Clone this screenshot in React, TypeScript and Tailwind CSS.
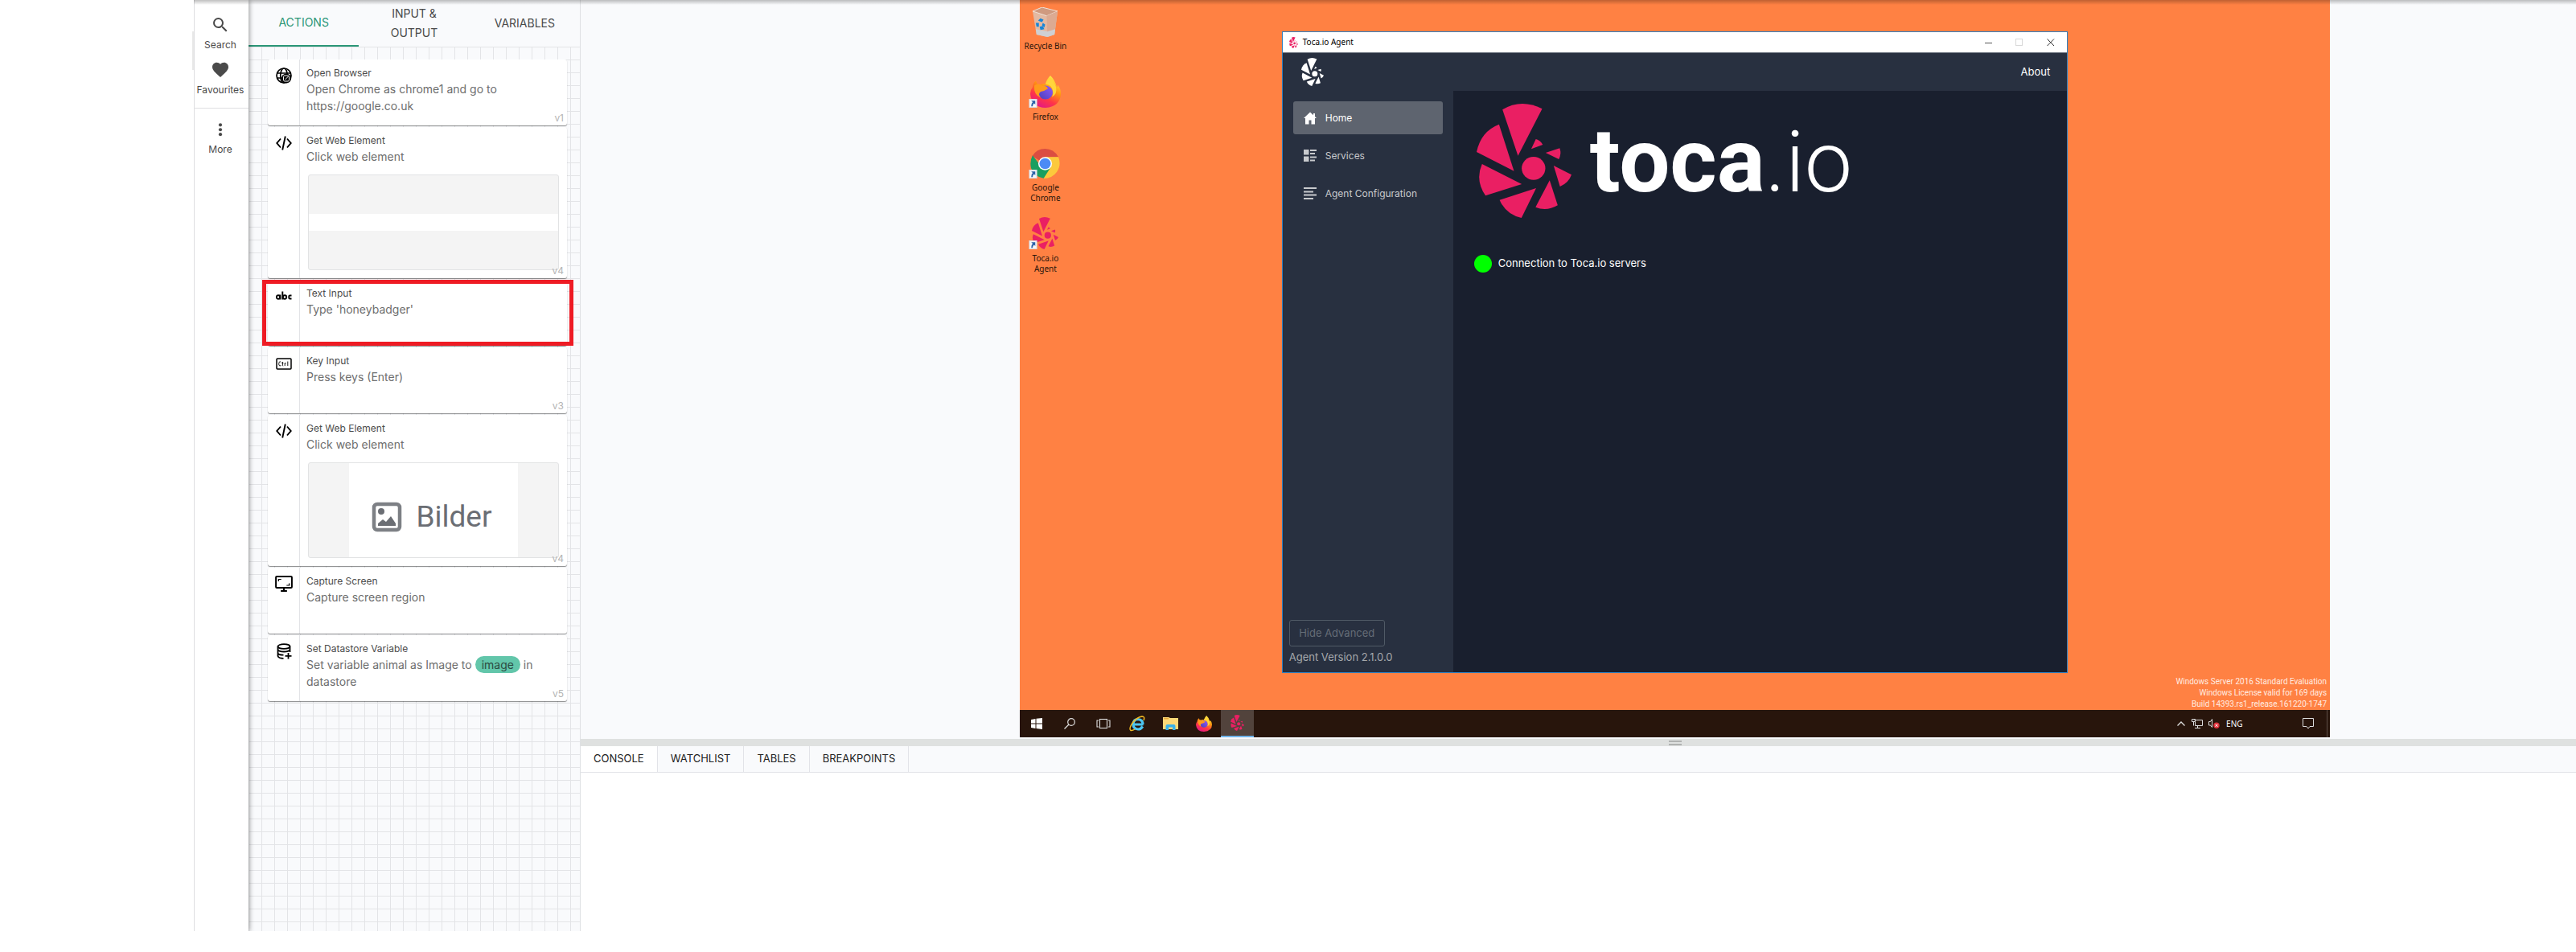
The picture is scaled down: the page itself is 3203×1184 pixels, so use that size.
import React from 'react';

const SANS = "font-['Inter','Liberation_Sans',sans-serif]";

type Kind = 'globe' | 'code' | 'abc' | 'ctrl' | 'screen' | 'db';

function TocaMark({ className }: { className: string }) {
  return (
    <svg viewBox="0 0 330 426" preserveAspectRatio="none" className={className} fill="currentColor" aria-hidden="true">
      <path d="M90 22Q155-20 228 19L144 194Z" />
      <path d="M78 77Q15 103 0 180L130 251Z" />
      <path d="M19 225Q-6 285 31 343L157 300Z" />
      <path d="M80 359Q102 413 156 426L207 315Z" />
      <path d="M205 386Q243 403 282 379L254 286Z" />
      <path d="M268 231L290 309Q320 296 330 265Z" />
      <path d="M240 183L286 207Q296 187 289 166Z" />
      <path d="M190 169L206 132Q222 137 230 153Z" />
      <ellipse cx="198" cy="241" rx="41" ry="43" />
    </svg>
  );
}

function ActionIcon({ kind }: { kind: Kind }) {
  const base = 'size-5 text-black';
  switch (kind) {
    case 'globe':
      return (
        <svg viewBox="0 0 20 20" className={base} fill="none" stroke="currentColor" strokeWidth="1.7">
          <circle cx="10" cy="10" r="9" />
          <ellipse cx="10" cy="10" rx="4.3" ry="9" />
          <path d="M1.5 7h17M1.5 13h17" />
          <circle cx="13" cy="13.5" r="6" fill="#000" stroke="none" />
          <rect x="9.500" y="10" width="7" height="7" rx="1.500" stroke="#fff" strokeWidth="1" />
          <path d="M11.500 15l4-4" stroke="#fff" strokeWidth="1" />
        </svg>
      );
    case 'code':
      return (
        <svg viewBox="0 0 20 20" className={base} fill="none" stroke="currentColor" strokeWidth="1.900">
          <path d="M6 4.500L1.300 10L6 15.500M14 4.500L18.700 10L14 15.500M11.800 1.500L8.200 18.500" />
        </svg>
      );
    case 'abc':
      return (
        <svg viewBox="0 0 20 20" className={base} fill="none" stroke="currentColor" strokeWidth="1.900">
          <circle cx="3" cy="11.500" r="2.200" />
          <path d="M5.400 8.500v6M8.300 4.500v10" />
          <circle cx="11" cy="11.500" r="2.200" />
          <path d="M19.500 9.500h-2q-1.200 0-1.200 1v2q0 1 1.200 1h2" />
        </svg>
      );
    case 'ctrl':
      return (
        <svg viewBox="0 0 20 20" className={base} fill="none" stroke="currentColor">
          <rect x="1" y="4" width="18" height="13" rx="1" strokeWidth="1.500" />
          <path d="M6.300 8.500Q5.800 7.800 5 7.800Q3.700 8 3.700 10.500T5 13Q6 13 6.400 12.200M8.400 8v4.500q0 .5.800.5M7.400 9.500h2M11.200 13V9.500M11.200 10.500q.3-1 1.600-.9M14.800 7.500V13" strokeWidth=".9" />
        </svg>
      );
    case 'screen':
      return (
        <svg viewBox="0 0 20 20" className="w-[22px] h-5 text-black" preserveAspectRatio="none" fill="none" stroke="currentColor" strokeWidth="1.800">
          <rect x="1" y="1" width="18" height="14" rx="1" />
          <path d="M10 15v4M6.500 19h7" />
          <path d="M4 7V4.500h3M16 9.500V12h-3" strokeWidth="1.200" />
        </svg>
      );
    default:
      return (
        <svg viewBox="0 0 20 20" className={base} fill="none" stroke="currentColor" strokeWidth="1.800">
          <ellipse cx="10" cy="4" rx="7.500" ry="2.800" />
          <path d="M2.500 4v12q1 2.800 7 2.800M17.500 4v7M2.500 8q1.500 2.500 7.500 2.500T17.500 8M2.500 12.500q1 2 7 2.200M11.500 15.800h8M15.500 12v7.500" />
        </svg>
      );
  }
}

function Card({
  kind,
  title,
  version,
  children,
  preview,
}: {
  kind: Kind;
  title: string;
  version?: string;
  children: React.ReactNode;
  preview?: React.ReactNode;
}) {
  return (
    <div
      className={`relative flex bg-white rounded-[3px] shadow-[0_1px_1px_rgba(0,0,0,0.45)] ${preview ? 'min-h-[188px]' : 'min-h-[82px]'}`}
    >
      <div className="w-10 shrink-0 border-r border-[#e2e3e6] flex justify-center items-start pt-[10px]">
        <ActionIcon kind={kind} />
      </div>
      <div className="flex-1 pl-2 pr-[10px] pt-2">
        <h3 className="text-[12px] leading-[18px] text-[#4c4c4c]">{title}</h3>
        <p className="text-[14px] leading-[21px] text-[#6e6e6e]">{children}</p>
        {preview && (
          <div className="mt-3 ml-[2px] h-[119px] rounded-[3px] border border-[#e2e3e4] bg-[#f4f4f4] flex overflow-hidden">{preview}</div>
        )}
      </div>
      {version && <span className="absolute right-1 bottom-[1px] text-[12px] leading-4 text-[#b4b4b4]">{version}</span>}
    </div>
  );
}

function FirefoxIcon({ className, id }: { className: string; id: string }) {
  return (
    <svg viewBox="0 0 38 42" preserveAspectRatio="none" className={className} aria-hidden="true">
      <defs>
        <linearGradient id={`${id}a`} x1="0.8" y1="0" x2="0.3" y2="1">
          <stop offset="0" stopColor="#fff44f" />
          <stop offset="0.4" stopColor="#ff980e" />
          <stop offset="0.7" stopColor="#ff3647" />
          <stop offset="1" stopColor="#e31587" />
        </linearGradient>
        <linearGradient id={`${id}b`} x1="1" y1="0" x2="0" y2="1">
          <stop offset="0" stopColor="#9059ff" />
          <stop offset="1" stopColor="#4a3fb5" />
        </linearGradient>
      </defs>
      <path d="M25 0Q20 5 19 11Q14 10 11 13Q8 11 7 7Q3 10 3 15Q0 19 0 24Q2 42 19 42Q38 40 38 23Q38 17 34 12Q34 15 33 15Q31 6 25 0Z" fill={`url(#${id}a)`} />
      <circle cx="19" cy="22" r="9" fill={`url(#${id}b)`} />
      <path d="M5 13Q10 9 15 13Q21 13 22 17Q18 20 13 21Q9 24 13 29Q4 25 5 13Z" fill="#ff9a1c" />
      <path d="M19 11Q27 12 28 20Q29 24 27 28Q34 24 32 15Q29 7 25 3Q20 6 19 11Z" fill="#ffd53c" />
    </svg>
  );
}

function ChromeIcon() {
  return (
    <svg viewBox="0 0 38 40" preserveAspectRatio="none" className="w-[37px] h-[37px]" aria-hidden="true">
      <path d="M19 20L2.500 10Q8 0 19 0Q30 0 36 11H19Z" fill="#db4d41" />
      <path d="M3 9Q-1 17 1 26Q5 38 18 40L27 25L19 20H11Z" fill="#1a9f60" />
      <path d="M19 11H36Q40 22 34 31Q28 40 17 40L26 25Z" fill="#fcc93c" />
      <circle cx="19" cy="20" r="8.800" fill="#fff" />
      <circle cx="19" cy="20" r="7.200" fill="#4c8bf5" />
    </svg>
  );
}

function BinIcon() {
  return (
    <svg viewBox="0 0 34 38" className="w-[33px] h-[37px]" aria-hidden="true">
      <path d="M1 5L13 0L33 5L29 35L20 38L6 35Z" fill="#e3b9a2" />
      <path d="M1 5L13 0L33 5L19 11Z" fill="#cf9a80" stroke="#f1e2d9" strokeWidth="1" />
      <path d="M19 11L33 5L29 35L20 38Z" fill="#dcaa92" />
      <path d="M5 28L20 31L30 28L29 35L20 38L6 35Z" fill="#cfd0d2" />
      <path d="M8 17L11 14L15 16L13 19L10 18ZM5 20L9 20L9 25L6 25ZM10 25L14 24L16 28L11 29ZM14 20L17 22L16 26L13 23Z" fill="#1585d8" />
    </svg>
  );
}

function Shortcut() {
  return (
    <svg viewBox="0 0 11 12" className="absolute bottom-0 left-[-1px] w-[11px] h-[11px]" aria-hidden="true">
      <rect x=".5" y=".5" width="10" height="11" fill="#f4f6f8" stroke="#d9dde2" />
      <path d="M3 2.500h5.500v5L7 6Q4.800 7.500 5 10H3Q2.600 6.500 5 4.300Z" fill="#2b62a8" />
    </svg>
  );
}

function DesktopItem({ label, shortcut = true, children }: { label: string; shortcut?: boolean; children: React.ReactNode }) {
  return (
    <button className="w-[64px] h-[88px] flex flex-col items-center">
      <span className="relative flex h-10 w-[39px] items-end justify-center">
        {children}
        {shortcut && <Shortcut />}
      </span>
      <span className="mt-[5px] w-[56px] text-[10px] leading-[13px] text-[#2a150c] font-['Noto_Sans','Open_Sans',sans-serif]">{label}</span>
    </button>
  );
}

function AgentNav({ label, active, icon }: { label: string; active?: boolean; icon: React.ReactNode }) {
  return (
    <button
      className={`h-[41px] rounded-[3px] flex items-center gap-[11px] pl-[13px] text-[12px] ${active ? 'bg-[#5e646f] text-white' : 'text-[#c8cacd]'}`}
    >
      <svg viewBox="0 0 16 16" className="size-4" fill="currentColor" aria-hidden="true">
        {icon}
      </svg>
      {label}
    </button>
  );
}

function AgentWindow() {
  return (
    <section className="absolute left-[20%] right-[20%] top-[39px] bottom-20 flex flex-col border border-[#2f7fc0] bg-[#191f2e]" aria-label="Toca.io Agent">
      <header className="h-[26px] shrink-0 bg-white flex items-center border-b border-[#6d7580] pl-2">
        <TocaMark className="w-[11px] h-[14px] text-[#ea1f63]" />
        <span className="ml-[6px] flex-1 text-[10px] text-black font-['Noto_Sans','Open_Sans',sans-serif]">Toca.io Agent</span>
        <button aria-label="Minimize" className="w-[38px] flex justify-center">
          <svg viewBox="0 0 10 10" className="size-[10px]" stroke="#555" fill="none"><path d="M0 5.500h9" /></svg>
        </button>
        <button aria-label="Maximize" className="w-[38px] flex justify-center">
          <svg viewBox="0 0 10 10" className="size-[10px]" stroke="#d8d8d8" fill="none"><rect x=".5" y=".5" width="8" height="8" /></svg>
        </button>
        <button aria-label="Close" className="w-[40px] flex justify-center">
          <svg viewBox="0 0 10 10" className="size-[10px]" stroke="#333" fill="none"><path d="M.5.500l8.500 8.500M9 .500L.500 9" /></svg>
        </button>
      </header>
      <div className="h-[47px] shrink-0 bg-[#283040] flex items-center justify-between pl-[23px] pr-[21px]">
        <TocaMark className="w-7 h-[35px] text-white" />
        <a href="#about" className="text-[13px] text-white">About</a>
      </div>
      <div className="flex-1 flex min-h-0">
        <nav className="w-[212px] shrink-0 bg-[#283040] flex flex-col pb-[6px]">
          <div className="flex flex-col gap-[6px] px-[13px] pt-[13px]">
            <AgentNav label="Home" active icon={<path d="M8 .5L0 8h2v7.500h4.500v-5h3v5H14V8h2l-2-2V2h-2v2.200Z" />} />
            <AgentNav label="Services" icon={<path d="M0 0h6.500v6.500H0ZM0 8.500h6.500V15H0ZM8 0h8v2H8ZM8 4h6v2H8ZM8 8.500h8v2H8ZM8 12.500h6v2H8Z" />} />
            <AgentNav label="Agent Configuration" icon={<path d="M0 0h16v2H0ZM0 4.500h12v2H0ZM0 8.500h16v2H0ZM0 13h12v2H0Z" />} />
          </div>
          <div className="mt-auto pl-2 flex flex-col items-start">
            <button className="h-[33px] w-[119px] rounded-[3px] border border-[#505a66] text-[13px] text-[#656d77]">Hide Advanced</button>
            <span className="mt-1 pb-1 text-[13px] leading-[18px] text-[#a5a8ac]">Agent Version 2.1.0.0</span>
          </div>
        </nav>
        <main className="flex-1 pl-[29px] pt-4">
          <div className="flex h-[142px]">
            <TocaMark className="w-[118px] h-[142px] text-[#ea1f63]" />
            <div className="ml-[23px] leading-[142px] text-white whitespace-nowrap font-['Roboto',sans-serif]">
              <span className="text-[112px] font-bold">toca</span>
              <span className="text-[106px] font-light">.io</span>
            </div>
          </div>
          <p className="mt-[46px] -ml-[3px] flex items-center gap-2 text-[13px] text-white">
            <span className="size-[22px] rounded-full bg-[#00ff00]" />
            Connection to Toca.io servers
          </p>
        </main>
      </div>
    </section>
  );
}

function Taskbar() {
  const btn = 'flex items-center justify-center';
  return (
    <footer className="h-[34px] shrink-0 bg-[#28150c] flex">
      <div className="w-[250px] grid grid-cols-6">
        <button className={btn} aria-label="Start">
          <svg viewBox="0 0 14 14" className="size-[14px]" fill="#fff"><path d="M0 2l5.500-1v5.500H0ZM6.500.800L14 0v6.500H6.500ZM0 7.500h5.500V13L0 12ZM6.500 7.500H14V14l-7.500-1Z" /></svg>
        </button>
        <button className={btn} aria-label="Search">
          <svg viewBox="0 0 14 14" className="size-[14px]" stroke="#ddd" fill="none" strokeWidth="1.200"><circle cx="9" cy="5" r="4.300" /><path d="M6 8L.500 13.500" /></svg>
        </button>
        <button className={btn} aria-label="Task view">
          <svg viewBox="0 0 18 14" className="w-[18px] h-[14px]" stroke="#ddd" fill="none" strokeWidth="1.100"><rect x="4.500" y="1.500" width="9" height="11" /><path d="M3 3H1v8h2M15 3h2v8h-2" /></svg>
        </button>
        <button className={btn} aria-label="Internet Explorer">
          <svg viewBox="0 0 20 20" className="size-5" fill="none">
            <path d="M17.500 11H5.800M16.800 13.500Q14.500 17 11 17Q5 16.500 5 10.500Q5.500 4.500 11 4.500Q17 5 17 11" stroke="#4cc5f1" strokeWidth="3.200" />
            <path d="M18 6Q20 1 16 1Q10 2 5 8Q-1 16 2 18.500Q4 19 7 17" stroke="#f0b922" strokeWidth="1.500" />
          </svg>
        </button>
        <button className={btn} aria-label="File Explorer">
          <svg viewBox="0 0 19 16" className="w-[19px] h-4"><path d="M0 0h7l2 1h10v14H0Z" fill="#fbd978" /><path d="M1 1h6v1.500H1Z" fill="#e9a93a" /><path d="M3.500 16v-5q0-2 2-2h8q2 0 2 2v5h-3.500v-3.500H7V16Z" fill="#38b2ea" /></svg>
        </button>
        <button className={btn} aria-label="Firefox"><FirefoxIcon className="w-5 h-5" id="fs" /></button>
      </div>
      <button className="w-[41px] bg-[#52433c] border-b-2 border-[#6fb4ea] flex items-center justify-center" aria-label="Toca.io Agent">
        <TocaMark className="w-[17px] h-5 text-[#ea1f63]" />
      </button>
      <div className="ml-auto flex items-center text-white">
        <svg viewBox="0 0 10 6" className="w-[10px] h-[6px]" stroke="#ddd" fill="none" strokeWidth="1.300"><path d="M.5 5.500L5 1l4.500 4.500" /></svg>
        <svg viewBox="0 0 14 12" className="ml-2 w-[14px] h-3" stroke="#ddd" fill="none"><path d="M3.500 1.500h10v7h-9v-5M7.500 9v2M4 11.500h7M.5.500h4v3h-4ZM2.500 3.500v5" /></svg>
        <svg viewBox="0 0 14 12" className="ml-[7px] w-[14px] h-3" fill="none"><path d="M4.500.500v10L2.500 8H.500V3.500h2Z" stroke="#ddd" /><circle cx="10" cy="8.300" r="3.700" fill="#e0323c" /><path d="M8.500 6.800l3 3M11.500 6.800l-3 3" stroke="#fff" /></svg>
        <span className="ml-2 w-5 text-[10px] font-['Noto_Sans','Open_Sans',sans-serif]">ENG</span>
        <svg viewBox="0 0 14 14" className="ml-[75px] w-[14px] h-[14px]" stroke="#ddd" fill="none"><path d="M.5.500h13v10h-4.500L7 13l-2-2.500H.500Z" /></svg>
        <span className="ml-[16px] h-[34px] w-1 border-l border-[#5d4e46]" />
      </div>
    </footer>
  );
}

function Desktop() {
  return (
    <div className="relative w-[72.700%] h-[917px] bg-[#ff8143] flex flex-col">
      <div className="flex-1 pt-[6px] flex flex-col items-start">
        <DesktopItem label="Recycle Bin" shortcut={false}><BinIcon /></DesktopItem>
        <DesktopItem label="Firefox"><FirefoxIcon className="w-[38px] h-10" id="fl" /></DesktopItem>
        <DesktopItem label="Google Chrome"><ChromeIcon /></DesktopItem>
        <DesktopItem label="Toca.io Agent"><TocaMark className="w-[33px] h-10 text-[#ea1f63]" /></DesktopItem>
      </div>
      <p className="px-1 text-right text-[10px] leading-[14px] text-[#ffece2] whitespace-pre-line font-['Roboto','Noto_Sans',sans-serif]">
        {'Windows Server 2016 Standard Evaluation\nWindows License valid for 169 days\nBuild 14393.rs1_release.161220-1747'}
      </p>
      <Taskbar />
      <AgentWindow />
    </div>
  );
}

export default function App() {
  const bottomTabs = ['CONSOLE', 'WATCHLIST', 'TABLES', 'BREAKPOINTS'];
  return (
    <div className={`relative flex min-h-screen bg-white pl-[241px] ${SANS}`}>
      <div className="pointer-events-none absolute left-[239px] top-[39px] h-12 w-[2px] bg-[#e8e8e8]" />
      <aside className="relative z-10 w-[68px] shrink-0 border-l border-[#dfdfe1] bg-white shadow-[1px_0_6px_rgba(0,0,0,0.4)] [clip-path:inset(0_-10px_0_0)] flex flex-col mb-[26px]">
        <div className="h-[135px] border-b border-[#dfdfe1] pr-[3px] pt-[18px] flex flex-col items-center text-[12px] text-[#4a4a4a]">
          <button className="flex flex-col items-center h-14">
            <svg viewBox="3 3 18 18" className="w-[18px] h-[26px]" fill="#4a4a4a"><path d="M15.500 14h-.79l-.28-.27A6.471 6.471 0 0 0 16 9.500 6.500 6.500 0 1 0 9.500 16c1.610 0 3.090-.59 4.230-1.570l.27.28v.79l5 4.990L20.490 19l-4.990-5zm-6 0C7.010 14 5 11.990 5 9.500S7.010 5 9.500 5 14 7.010 14 9.500 11.990 14 9.500 14z" /></svg>
            <span className="mt-1 leading-4">Search</span>
          </button>
          <button className="flex flex-col items-center">
            <svg viewBox="2 3 20 18.500" className="w-5 h-[26px]" fill="#4a4a4a"><path d="M12 21.350l-1.450-1.320C5.400 15.360 2 12.280 2 8.500 2 5.420 4.420 3 7.500 3c1.740 0 3.410.81 4.500 2.090C13.090 3.810 14.760 3 16.500 3 19.580 3 22 5.420 22 8.500c0 3.780-3.400 6.860-8.550 11.540L12 21.350z" /></svg>
            <span className="mt-1 leading-4">Favourites</span>
          </button>
        </div>
        <button className="pr-[3px] pt-[18px] flex flex-col items-center text-[12px] text-[#4a4a4a]">
          <svg viewBox="0 0 6 18" className="w-[6px] h-[17px]" fill="#4a4a4a"><circle cx="3" cy="2.500" r="2.200" /><circle cx="3" cy="8.700" r="2.200" /><circle cx="3" cy="15" r="2.200" /></svg>
          <span className="mt-2 leading-4">More</span>
        </button>
      </aside>

      <section className="w-[413px] shrink-0 border-r border-[#dfe1e4] bg-[#f9fafc] flex flex-col mb-[26px]">
        <div className="h-[58px] shrink-0 grid grid-cols-3 text-[14px] leading-6 text-[#4a4a4a]" role="tablist">
          <button role="tab" aria-selected="true" className="border-b-2 border-[#2b9677] text-[#2b9677]">ACTIONS</button>
          <button role="tab" aria-selected="false" className="px-8">INPUT &amp; OUTPUT</button>
          <button role="tab" aria-selected="false">VARIABLES</button>
        </div>
        <div className="flex-1 bg-[linear-gradient(#e3e4e7_1px,transparent_1px),linear-gradient(90deg,#e3e4e7_1px,transparent_1px)] bg-[size:16px_16px] pt-4 pl-6 pr-4">
          <ul className="flex flex-col gap-[2px]">
            <li><Card kind="globe" title="Open Browser" version="v1">Open Chrome as chrome1 and go to https://google.co.uk</Card></li>
            <li><Card kind="code" title="Get Web Element" version="v4" preview={<div className="my-12 flex-1 bg-white" />}>Click web element</Card></li>
            <li className="relative">
              <Card kind="abc" title="Text Input">Type &apos;honeybadger&apos;</Card>
              <div className="pointer-events-none absolute -left-[7px] -right-2 inset-y-0 border-[5px] border-[#ee1b24]" />
            </li>
            <li><Card kind="ctrl" title="Key Input" version="v3">Press keys (Enter)</Card></li>
            <li>
              <Card
                kind="code"
                title="Get Web Element"
                version="v4"
                preview={
                  <div className="mx-[50px] flex-1 bg-white flex items-center justify-center gap-[17px] pt-4 pr-1 text-[#6b6e74]">
                    <svg viewBox="0 0 38 38" className="size-[38px]" fill="none" aria-hidden="true">
                      <rect x="3" y="3" width="32" height="32" rx="4" stroke="#7d8085" strokeWidth="4.500" />
                      <circle cx="12" cy="12" r="4" fill="#6b6e74" />
                      <path d="M8 30v-3l6-5 4 3 6-7 6 9v3Z" fill="#6b6e74" />
                    </svg>
                    <span className="text-[37px] font-['Roboto',sans-serif]">Bilder</span>
                  </div>
                }
              >
                Click web element
              </Card>
            </li>
            <li><Card kind="screen" title="Capture Screen">Capture screen region</Card></li>
            <li>
              <Card kind="db" title="Set Datastore Variable" version="v5">
                Set variable animal as Image to <span className="inline-block rounded-full bg-[#62c6aa] px-2 text-[#2c4b42]">image</span> in datastore
              </Card>
            </li>
          </ul>
        </div>
      </section>

      <div className="flex-1 min-w-0 flex flex-col">
        <div className="h-[919px] shrink-0 bg-[#f9fafc] flex justify-center pl-60">
          <Desktop />
        </div>
        <div className="h-[9px] shrink-0 bg-[#dfe1e0] flex flex-col items-center justify-center gap-[2px] pl-60">
          <span className="w-4 h-[2px] bg-[#b0b2b1]" />
          <span className="w-4 h-[2px] bg-[#b0b2b1]" />
        </div>
        <div className="h-[33px] shrink-0 border-b border-[#e2e3e8] bg-[#f9fafc] flex text-[13px] text-[#222]" role="tablist">
          {bottomTabs.map((t, i) => (
            <button key={t} role="tab" aria-selected={i === 0} className={`px-4 border-r border-[#e2e3e8] ${i === 0 ? 'bg-white' : ''}`}>
              {t}
            </button>
          ))}
        </div>
      </div>
      <div className="pointer-events-none absolute left-[241px] right-0 top-0 z-20 h-[6px] bg-gradient-to-b from-black/25 to-transparent" />
    </div>
  );
}
